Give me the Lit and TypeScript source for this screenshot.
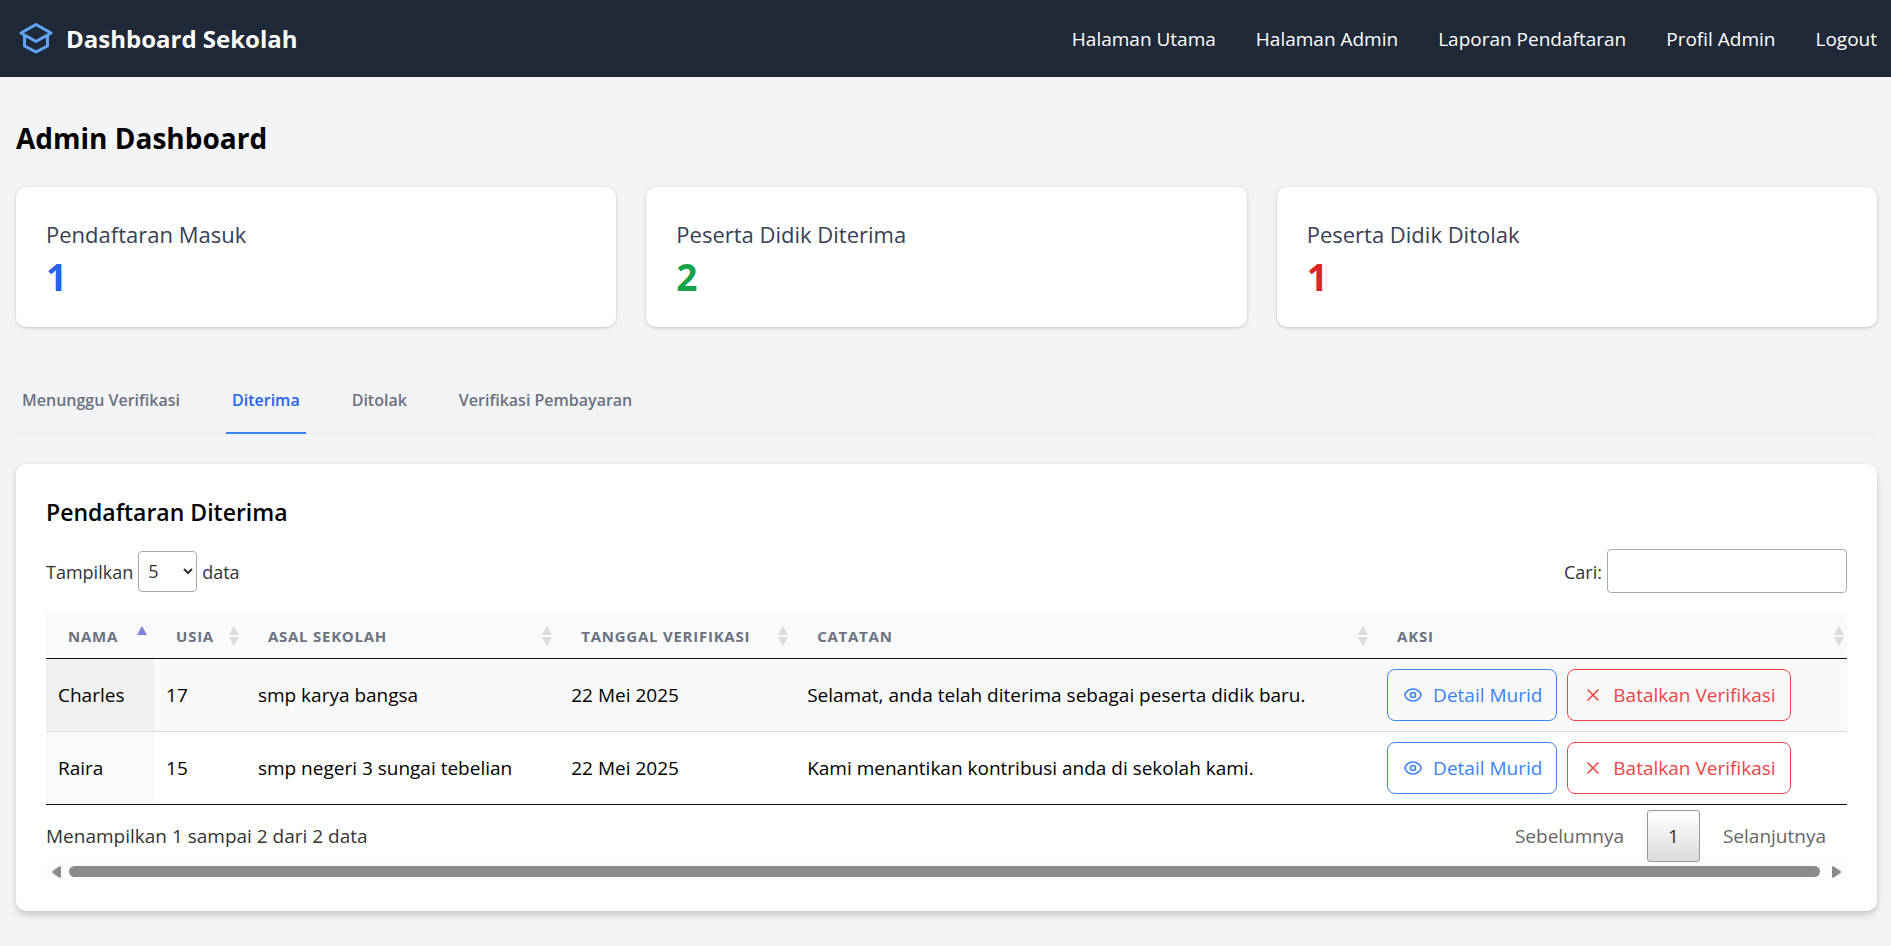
import { LitElement, html, css, svg } from "lit";
import { customElement, state } from "lit/decorators.js";
import { classMap } from "lit/directives/class-map.js";

interface Row {
  nama: string;
  usia: number;
  asal: string;
  tanggal: string;
  catatan: string;
}

const NAV = ["Halaman Utama", "Halaman Admin", "Laporan Pendaftaran", "Profil Admin", "Logout"];

const STATS = [
  { label: "Pendaftaran Masuk", value: 1, tone: "blue" },
  { label: "Peserta Didik Diterima", value: 2, tone: "green" },
  { label: "Peserta Didik Ditolak", value: 1, tone: "red" },
];

const TABS = ["Menunggu Verifikasi", "Diterima", "Ditolak", "Verifikasi Pembayaran"];

const COLUMNS = [
  { label: "Nama", cls: "c-nama" },
  { label: "Usia", cls: "c-usia" },
  { label: "Asal Sekolah", cls: "c-asal" },
  { label: "Tanggal Verifikasi", cls: "c-tanggal" },
  { label: "Catatan", cls: "c-catatan" },
  { label: "Aksi", cls: "c-aksi" },
];

const ROWS: Row[] = [
  {
    nama: "Charles",
    usia: 17,
    asal: "smp karya bangsa",
    tanggal: "22 Mei 2025",
    catatan: "Selamat, anda telah diterima sebagai peserta didik baru.",
  },
  {
    nama: "Raira",
    usia: 15,
    asal: "smp negeri 3 sungai tebelian",
    tanggal: "22 Mei 2025",
    catatan: "Kami menantikan kontribusi anda di sekolah kami.",
  },
];

const capIcon = html`<svg class="cap" viewBox="0 0 36 34" aria-hidden="true">
  <path d="M18 2.5 33 11 18 19.5 3 11Z" />
  <path d="M6.5 13.5V24L18 30 29.5 24V13.5" />
</svg>`;

const eyeIcon = html`<svg class="eye" viewBox="0 0 18 14" aria-hidden="true">
  <path d="M9 1C4.5 1 1 4.5 1 7s3.500 6 8 6 8-3.500 8-6-3.500-6-8-6Z" />
  <circle cx="9" cy="7" r="2.500" />
</svg>`;

const crossIcon = html`<svg class="cross" viewBox="0 0 14 14" aria-hidden="true">
  <path d="M1.500 1.500 12.500 12.500M12.500 1.500 1.500 12.500" />
</svg>`;

const sortIcon = (asc: boolean) => html`<svg
  class=${classMap({ sort: true, asc })}
  viewBox="0 0 12 20"
  aria-hidden="true"
>
  <path d="M6 0 11 9H1Z" />
  ${asc ? "" : svg`<path d="M6 20 11 11H1Z" />`}
</svg>`;

@customElement("app-root")
export class AppRoot extends LitElement {
  @state() private tab = "Diterima";

  static styles = css`
    :host {
      display: block;
      min-height: 100vh;
      background: #f3f4f6;
      color: #000;
      font-family: "Open Sans", "Noto Sans", sans-serif;
      font-size: 19px;
      line-height: 30px;
    }
    *,
    *::before {
      box-sizing: border-box;
    }
    h1,
    h2,
    h3,
    p {
      margin: 0;
    }
    button,
    input,
    select {
      font: inherit;
      color: inherit;
      margin: 0;
    }
    button {
      cursor: pointer;
    }
    a {
      color: inherit;
      text-decoration: none;
    }
    .bar {
      display: flex;
      align-items: center;
      justify-content: space-between;
      height: 77px;
      padding: 0 14px 0 18px;
      background: #1f2937;
      color: #fff;
    }
    .brand {
      display: flex;
      align-items: center;
      gap: 12px;
      font-size: 24px;
      font-weight: 700;
    }
    .cap {
      width: 36px;
      height: 34px;
      fill: none;
      stroke: #60a5fa;
      stroke-width: 3;
      stroke-linejoin: round;
    }
    .links {
      display: flex;
      gap: 40px;
    }
    main {
      padding: 40px 14px 35px 16px;
    }
    h1 {
      font-size: 28px;
      font-weight: 700;
      line-height: 42px;
      margin-bottom: 28px;
    }
    .stats {
      display: grid;
      grid-template-columns: repeat(3, 1fr);
      gap: 30px;
    }
    .stat {
      padding: 30px;
      border-radius: 10px;
      background: #fff;
      box-shadow: 0 1px 4px rgba(0, 0, 0, 0.1), 0 1px 3px rgba(0, 0, 0, 0.1);
    }
    .stat h3 {
      color: #374151;
      font-size: 22px;
      font-weight: 500;
      line-height: 35px;
    }
    .stat p {
      padding-top: 4px;
      font-size: 37px;
      font-weight: 700;
      line-height: 41px;
    }
    .blue {
      color: #2563eb;
    }
    .green {
      color: #16a34a;
    }
    .red {
      color: #dc2626;
    }
    .tabs {
      display: flex;
      gap: 40px;
      margin: 40px 0 30px;
      border-bottom: 1px solid #e5e7eb;
    }
    .tab {
      margin-bottom: -1px;
      padding: 21px 6px 19px;
      border: 0;
      border-bottom: 2px solid transparent;
      background: none;
      color: #6b7280;
      font-size: 16px;
      font-weight: 600;
      line-height: 25px;
    }
    .tab.on {
      border-color: #3b82f6;
      color: #2563eb;
    }
    .panel {
      padding: 30px;
      border-radius: 10px;
      background: #fff;
      box-shadow: 0 5px 8px rgba(0, 0, 0, 0.1), 0 2px 5px rgba(0, 0, 0, 0.1);
    }
    h2 {
      font-size: 23px;
      font-weight: 600;
      line-height: 37px;
      margin-bottom: 18px;
    }
    .tools {
      display: flex;
      justify-content: space-between;
      align-items: center;
      margin-bottom: 20px;
      color: #333;
      font-size: 18px;
    }
    .tools label {
      display: flex;
      align-items: center;
      gap: 5px;
    }
    .tools span {
      padding-top: 2px;
    }
    .tools select {
      width: 59px;
      height: 41px;
      padding: 5px;
      border: 1px solid #aaa;
      border-radius: 4px;
      background: transparent;
    }
    .tools input {
      width: 240px;
      height: 44px;
      padding: 6px;
      border: 1px solid #aaa;
      border-radius: 4px;
      background: transparent;
    }
    table {
      width: 100%;
      table-layout: fixed;
      border-collapse: separate;
      border-spacing: 0;
      border-bottom: 1px solid #111;
    }
    .c-nama {
      width: 6%;
    }
    .c-usia {
      width: 5.1%;
    }
    .c-asal {
      width: 17.4%;
    }
    .c-tanggal {
      width: 13.1%;
    }
    .c-catatan {
      width: 32.2%;
    }
    th {
      height: 46px;
      padding: 0 6px 0 22px;
      border-bottom: 1px solid #111;
      background: #f9fafb;
      color: #6b7280;
      font-size: 15px;
      font-weight: 700;
      letter-spacing: 0.05em;
      line-height: 20px;
      text-align: left;
      text-transform: uppercase;
      white-space: nowrap;
    }
    th:last-child {
      padding-right: 2px;
    }
    .head {
      display: flex;
      align-items: center;
      justify-content: space-between;
    }
    .sort {
      width: 12px;
      height: 20px;
      flex: none;
      fill: #dcdcdc;
    }
    .sort.asc {
      fill: #7d80dc;
    }
    td {
      height: 72px;
      padding: 10px 12px;
      white-space: nowrap;
    }
    tr + tr td {
      height: 73px;
      border-top: 1px solid #ddd;
    }
    tbody tr:nth-child(odd) {
      background: #f9f9f9;
    }
    tbody tr:nth-child(odd) td:first-child {
      background: #f1f1f1;
    }
    tbody tr:nth-child(even) td:first-child {
      background: #fafafa;
    }
    .actions {
      display: flex;
      gap: 10px;
    }
    .act {
      display: flex;
      align-items: center;
      height: 52px;
      padding: 0 14px 0 16px;
      border: 1px solid;
      border-radius: 8px;
      background: transparent;
    }
    .act svg {
      fill: none;
      stroke: currentColor;
      flex: none;
    }
    .detail {
      gap: 11px;
      color: #3b82f6;
    }
    .cancel {
      gap: 13px;
      padding-left: 18px;
      color: #ef4444;
    }
    .eye {
      width: 18px;
      height: 14px;
      stroke-width: 1.6;
    }
    .cross {
      width: 14px;
      height: 14px;
      stroke-width: 1.6;
    }
    .foot {
      display: flex;
      justify-content: space-between;
      align-items: center;
      margin-top: 5px;
      color: #333;
    }
    .pager {
      display: flex;
      gap: 2px;
    }
    .page {
      height: 52px;
      padding: 0 20px;
      border: 1px solid transparent;
      border-radius: 3px;
      background: none;
      color: #666;
    }
    .page.on {
      border-color: #979797;
      background: linear-gradient(#fff, #dcdcdc);
      color: #333;
    }
    .scroll {
      display: flex;
      align-items: center;
      gap: 8px;
      height: 19px;
      padding: 0 6px;
      background: #fcfcfc;
    }
    .scroll svg {
      width: 9px;
      height: 12px;
      fill: #8b8b8b;
      flex: none;
    }
    .track {
      flex: 1;
      padding-right: 4px;
    }
    .thumb {
      height: 11px;
      border-radius: 6px;
      background: #8b8b8b;
    }
  `;

  render() {
    return html`
      <header class="bar">
        <a class="brand" href="#">${capIcon}<span>Dashboard Sekolah</span></a>
        <nav class="links">${NAV.map((n) => html`<a href="#">${n}</a>`)}</nav>
      </header>
      <main>
        <h1>Admin Dashboard</h1>
        <section class="stats">
          ${STATS.map(
            (s) => html`<article class="stat">
              <h3>${s.label}</h3>
              <p class=${s.tone}>${s.value}</p>
            </article>`
          )}
        </section>
        <nav class="tabs">
          ${TABS.map(
            (t) => html`<button
              type="button"
              class=${classMap({ tab: true, on: t === this.tab })}
              @click=${() => (this.tab = t)}
            >${t}</button>`
          )}
        </nav>
        <section class="panel">
          <h2>Pendaftaran Diterima</h2>
          <div class="tools">
            <label>
              <span>Tampilkan</span>
              <select>
                <option>5</option>
                <option>10</option>
                <option>25</option>
              </select>
              <span>data</span>
            </label>
            <label><span>Cari:</span><input type="search" /></label>
          </div>
          <table>
            <thead>
              <tr>
                ${COLUMNS.map(
                  (c, i) => html`<th class=${c.cls} scope="col">
                    <div class="head"><span>${c.label}</span>${sortIcon(i === 0)}</div>
                  </th>`
                )}
              </tr>
            </thead>
            <tbody>
              ${ROWS.map(
                (r) => html`<tr>
                  <td>${r.nama}</td>
                  <td>${r.usia}</td>
                  <td>${r.asal}</td>
                  <td>${r.tanggal}</td>
                  <td>${r.catatan}</td>
                  <td>
                    <div class="actions">
                      <button type="button" class="act detail">${eyeIcon}<span>Detail Murid</span></button>
                      <button type="button" class="act cancel">${crossIcon}<span>Batalkan Verifikasi</span></button>
                    </div>
                  </td>
                </tr>`
              )}
            </tbody>
          </table>
          <div class="foot">
            <span>Menampilkan 1 sampai 2 dari 2 data</span>
            <div class="pager">
              <button type="button" class="page">Sebelumnya</button>
              <button type="button" class="page on">1</button>
              <button type="button" class="page">Selanjutnya</button>
            </div>
          </div>
          <div class="scroll" aria-hidden="true">
            <svg viewBox="0 0 9 12"><path d="M7.500.300Q9 0 9 1.500V10.500Q9 12 7.500 11.700L.500 7Q-.300 6 .500 5Z" /></svg>
            <div class="track"><div class="thumb"></div></div>
            <svg viewBox="0 0 9 12"><path d="M1.500.300Q0 0 0 1.500V10.500Q0 12 1.500 11.700L8.500 7Q9.300 6 8.500 5Z" /></svg>
          </div>
        </section>
      </main>
    `;
  }
}
